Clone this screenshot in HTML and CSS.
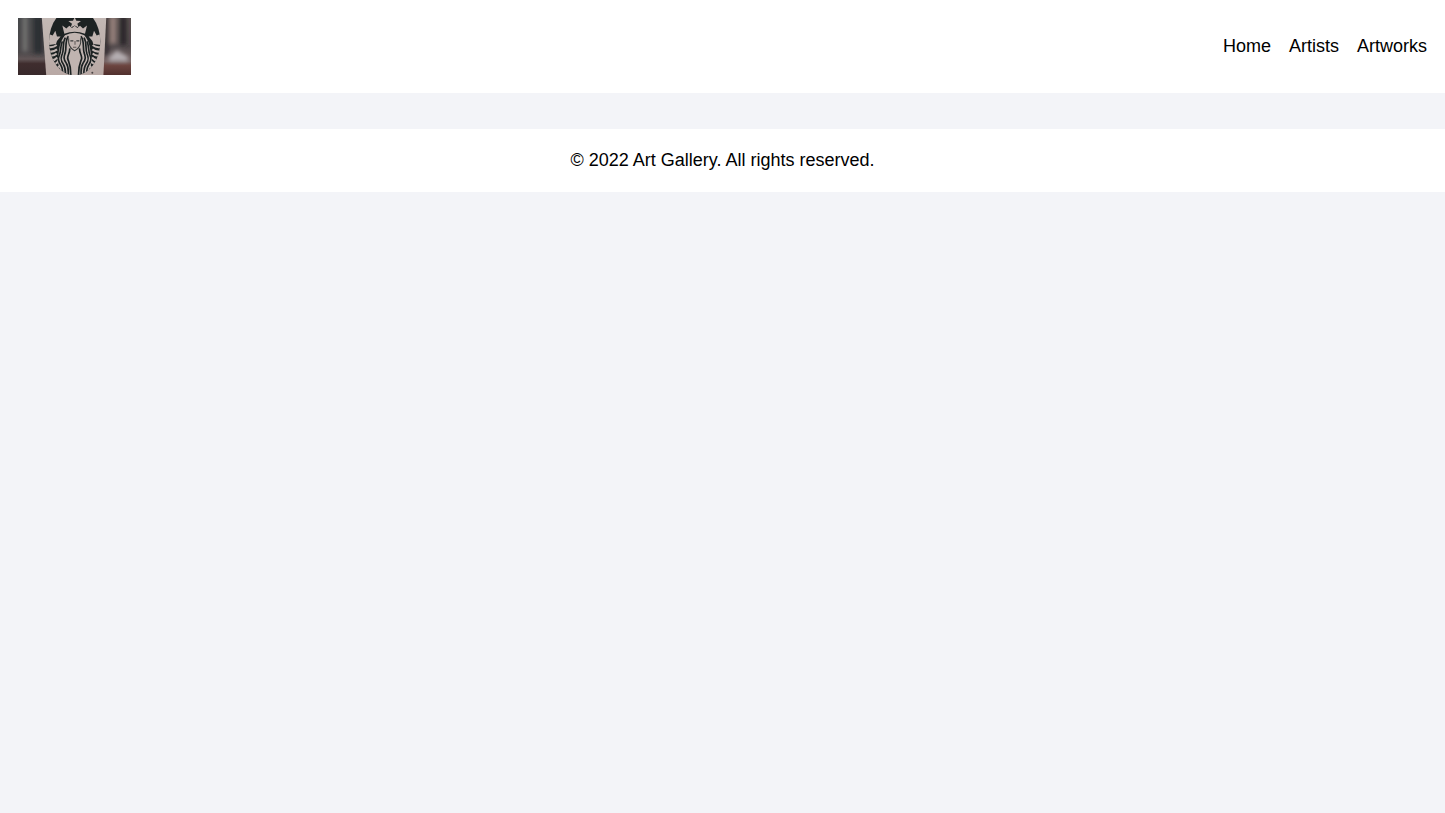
FILE: index.html
```html
<!DOCTYPE html>
<html lang="en">
<head>
  <meta charset="utf-8">
  <meta name="viewport" content="width=device-width, initial-scale=1">
  <title>Art Gallery</title>
  <link rel="stylesheet" href="styles.css">
</head>
<body>
  <header class="site-header">
    <svg class="logo" viewBox="12 12 339 169" preserveAspectRatio="none" role="img" aria-label="Art Gallery logo">
      <defs>
        <linearGradient id="left" x1="0" y1="0" x2="0" y2="1">
          <stop offset="0" stop-color="#454749"/><stop offset=".6" stop-color="#4b4749"/>
          <stop offset=".72" stop-color="#625657"/><stop offset=".8" stop-color="#3f2d2e"/><stop offset="1" stop-color="#38292b"/>
        </linearGradient>
        <linearGradient id="right" x1="0" y1="0" x2="0" y2="1">
          <stop offset="0" stop-color="#5b5250"/><stop offset=".5" stop-color="#51494b"/>
          <stop offset=".76" stop-color="#756363"/><stop offset=".83" stop-color="#6c4540"/><stop offset="1" stop-color="#51302e"/>
        </linearGradient>
        <linearGradient id="cup" x1="0" y1="0" x2="0" y2="1">
          <stop offset="0" stop-color="#c3b9b5"/><stop offset="1" stop-color="#b8a8a4"/>
        </linearGradient>
        <filter id="soft" x="-20%" y="-20%" width="140%" height="140%"><feGaussianBlur stdDeviation="7"/></filter>
        <filter id="print"><feGaussianBlur stdDeviation="1.2"/></filter>
        <clipPath id="seal"><ellipse cx="182" cy="82" rx="77" ry="100"/></clipPath>
      </defs>
      <path fill="url(#left)" d="M12 12h90v169H12z"/>
      <path fill="url(#right)" d="M260 12h91v169h-91z"/>
      <g filter="url(#soft)">
        <path fill="#777675" d="M26 6h14v106H26z"/>
        <path fill="#2a2e31" d="M60 6h25v111H60z"/>
        <path fill="#96817b" d="M288 6h18v82h-18z"/>
        <path fill="#2c2729" d="M272 6h12v119h-12zM318 6h20v86h-20z"/>
        <path fill="#b5afb2" d="M284 130l24-23 34 21v12h-58z"/>
      </g>
      <g filter="url(#print)">
        <path fill="url(#cup)" d="M83 6h194l-9 180H97z"/>
        <g clip-path="url(#seal)">
          <path fill="#1c2224" d="M100 0h164v190H100z"/>
          <path fill="#c0b4b0" d="M182 10l5 10 14 1-11 8 4 11-12-6-12 6 4-11-11-8 14-1z"/>
          <path fill="#c0b4b0" d="M145 34l12 9 9-8 8 7 8-7 8 7 8-7 9 8 12-9-6 25q-31-13-62 0z"/>
          <path fill="#c0b4b0" d="M106 60l10 4 8-14 5 17 11 0-11 13-3 9-28 4zM258 60l-10 4-8-14-5 17-11 0 11 13 3 9 28 4z"/>
          <g fill="none" stroke="#c0b4b0" stroke-width="6">
            <path d="M100 97q16 5 28-5M101 110q16 5 28-5M104 123q13 4 24-6M108 136q12 4 22-7M114 149q12 1 20-9M123 163q10-1 15-10"/>
            <path d="M264 97q-16 5-28-5M263 110q-16 5-28-5M260 123q-13 4-24-6M256 136q-12 4-22-7M250 149q-12 1-20-9M241 163q-10-1-15-10"/>
          </g>
          <path fill="#c0b4b0" d="M153 63q29-15 58 0 15 17 18 46 2 17 5 30l-16 52h-72l-16-52q3-13 5-30 3-29 18-46z"/>
          <g fill="none" stroke="#1c2224" stroke-width="5">
            <path d="M163 66c-11 16-5 33-9 48-5 14-6 20 3 32q8 12 5 40"/>
            <path d="M154 70c-10 17-3 33-9 48-6 13-5 20 3 31q8 12 6 37"/>
            <path d="M145 81c-7 15-3 28-9 41-6 12-3 19 4 29q7 11 6 31"/>
            <path d="M167 102c2 12-7 20-6 30 2 10 11 18 9 54"/>
            <path d="M201 66c11 16 5 33 9 48 5 14 6 20-3 32q-8 12-5 40"/>
            <path d="M210 70c10 17 3 33 9 48 6 13 5 20-3 31q-8 12-6 37"/>
            <path d="M219 81c7 15 3 28 9 41 6 12 3 19-4 29q-7 11-6 31"/>
            <path d="M197 102c-2 12 7 20 6 30-2 10-11 18-9 54"/>
          </g>
          <path fill="none" stroke="#393b3b" stroke-width="3" d="M164 72v13q2 15 18 24 16-9 18-24V72"/>
          <path fill="none" stroke="#393b3b" stroke-width="4" d="M169 80h9M187 80h9"/>
          <path fill="none" stroke="#5b5553" stroke-width="3" d="M183 80v11M177 99h10"/>
        </g>
        <circle cx="235" cy="174" r="3" fill="#4b4444"/>
      </g>
    </svg>
    <nav class="site-nav" aria-label="Main">
      <a class="nav-link" href="#home">Home</a>
      <a class="nav-link" href="#artists">Artists</a>
      <a class="nav-link" href="#artworks">Artworks</a>
    </nav>
  </header>
  <main class="content"></main>
  <footer class="site-footer">© 2022 Art Gallery. All rights reserved.</footer>
</body>
</html>
```
FILE: styles.css
```css
body {
  margin: 0;
  background: #f3f4f8;
  color: #000;
  font-family: "Liberation Sans", Arial, sans-serif;
  font-size: 18px;
  line-height: 27px;
}

.site-header {
  display: flex;
  align-items: center;
  justify-content: space-between;
  padding: 18px;
  background: #fff;
}

.logo {
  display: block;
  width: 113px;
  height: 57px;
}

.site-nav {
  display: flex;
  gap: 18px;
}

.nav-link {
  color: inherit;
  text-decoration: none;
}

.content {
  padding: 18px;
}

.site-footer {
  padding: 18px;
  background: #fff;
  text-align: center;
}
```
